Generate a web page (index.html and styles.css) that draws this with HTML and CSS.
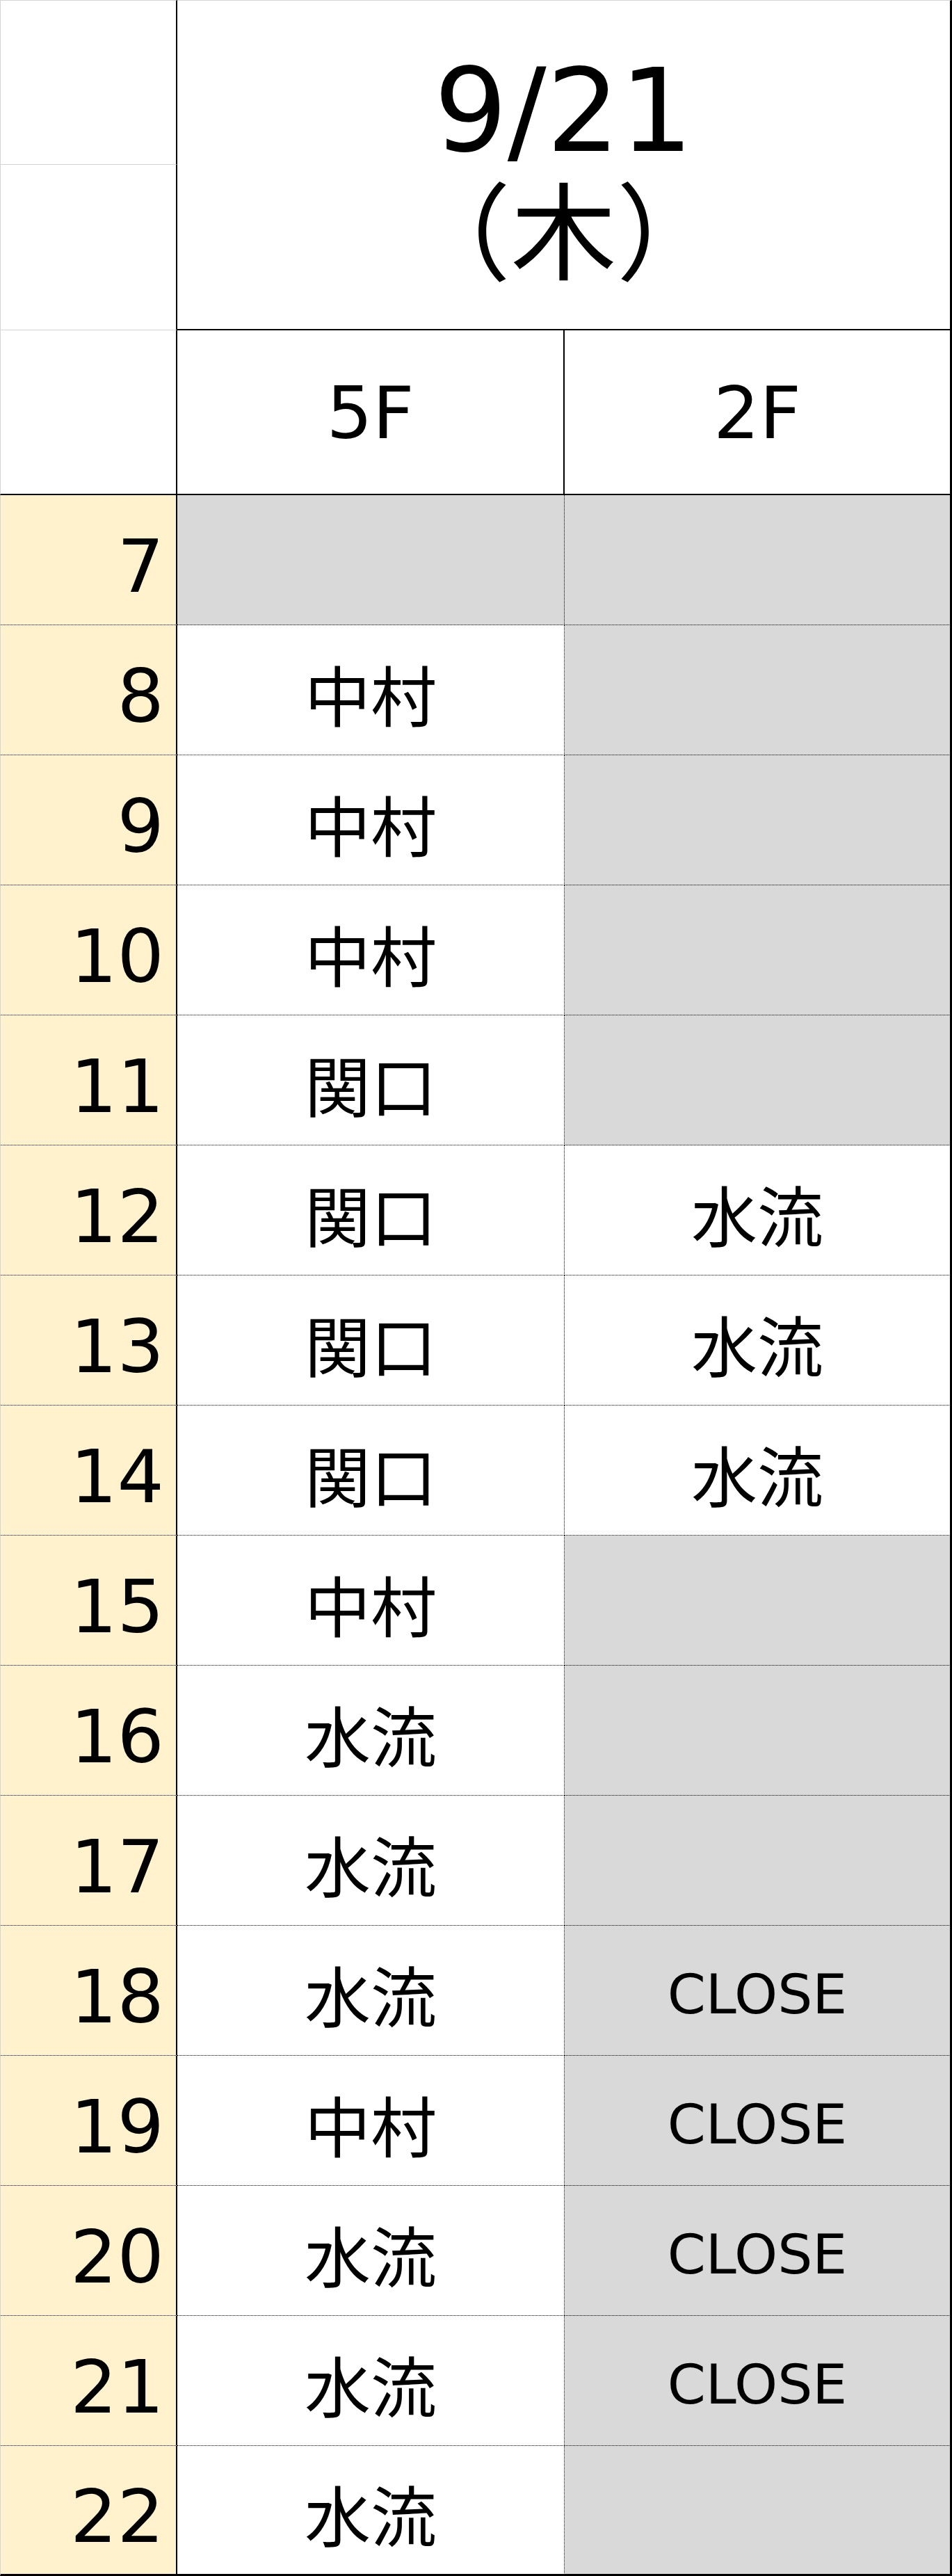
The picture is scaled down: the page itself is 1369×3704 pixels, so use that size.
FILE: index.html
```html
<!DOCTYPE html>
<html lang="ja">
<head>
<meta charset="utf-8">
<title>9/21（木）</title>
<link rel="stylesheet" href="styles.css">
</head>
<body>
<div class="sheet">
  <div class="cell corner corner-a"></div>
  <div class="cell date"><span class="date-line">9/21</span><span class="date-line day">（木）</span></div>
  <div class="cell corner corner-b"></div>
  <div class="cell corner corner-c"></div>
  <div class="cell floor f5">5F</div>
  <div class="cell floor f2">2F</div>

  <div class="cell hour">7</div><div class="cell slot s5 off"></div><div class="cell slot s2 off"></div>
  <div class="cell hour">8</div><div class="cell slot s5">中村</div><div class="cell slot s2 off"></div>
  <div class="cell hour">9</div><div class="cell slot s5">中村</div><div class="cell slot s2 off"></div>
  <div class="cell hour">10</div><div class="cell slot s5">中村</div><div class="cell slot s2 off"></div>
  <div class="cell hour">11</div><div class="cell slot s5">関口</div><div class="cell slot s2 off"></div>
  <div class="cell hour">12</div><div class="cell slot s5">関口</div><div class="cell slot s2">水流</div>
  <div class="cell hour">13</div><div class="cell slot s5">関口</div><div class="cell slot s2">水流</div>
  <div class="cell hour">14</div><div class="cell slot s5">関口</div><div class="cell slot s2">水流</div>
  <div class="cell hour">15</div><div class="cell slot s5">中村</div><div class="cell slot s2 off"></div>
  <div class="cell hour">16</div><div class="cell slot s5">水流</div><div class="cell slot s2 off"></div>
  <div class="cell hour">17</div><div class="cell slot s5">水流</div><div class="cell slot s2 off"></div>
  <div class="cell hour">18</div><div class="cell slot s5">水流</div><div class="cell slot s2 off close">CLOSE</div>
  <div class="cell hour">19</div><div class="cell slot s5">中村</div><div class="cell slot s2 off close">CLOSE</div>
  <div class="cell hour">20</div><div class="cell slot s5">水流</div><div class="cell slot s2 off close">CLOSE</div>
  <div class="cell hour">21</div><div class="cell slot s5">水流</div><div class="cell slot s2 off close">CLOSE</div>
  <div class="cell hour last">22</div><div class="cell slot s5 last">水流</div><div class="cell slot s2 off last"></div>
</div>
</body>
</html>
```

FILE: styles.css
```css
html, body {
  margin: 0;
  padding: 0;
  background: #ffffff;
}

.sheet {
  display: grid;
  grid-template-columns: 255px 557px 557px;
  grid-template-rows: 237px 238px 237px repeat(16, 187px);
  width: 1369px;
  font-family: "DejaVu Sans", "Noto Sans CJK JP", sans-serif;
  color: #000;
}

.cell {
  box-sizing: border-box;
  display: flex;
  align-items: center;
  justify-content: center;
  line-height: 1;
  white-space: nowrap;
}

.corner {
  grid-column: 1;
  border-left: 1px solid #d4d4d4;
  border-right: 2px solid #000;
  border-bottom: 1px solid #d4d4d4;
}
.corner-a { grid-row: 1; border-top: 1px solid #d4d4d4; }
.corner-b { grid-row: 2; }
.corner-c { grid-row: 3; border-bottom: 2px solid #000; }

.date {
  grid-column: 2 / 4;
  grid-row: 1 / 3;
  flex-direction: column;
  border-top: 1px solid #d4d4d4;
  border-right: 3px solid #000;
  border-bottom: 2px solid #000;
  padding-bottom: 4px;
}
.date-line {
  display: block;
  font-size: 166px;
  line-height: 180px;
}
.date-line.day {
  font-family: "Noto Sans CJK JP", sans-serif;
  font-size: 152px;
  line-height: 150px;
}

.floor {
  grid-row: 3;
  font-size: 104px;
  border-bottom: 2px solid #000;
  padding-top: 2px;
}
.f5 { border-right: 2px solid #000; }
.f2 { border-right: 3px solid #000; }

.hour {
  grid-column: 1;
  justify-content: flex-end;
  background: #fff2cc;
  border-left: 1px solid #d4d4d4;
  border-right: 2px solid #000;
  border-bottom: 1px dotted #000;
  padding-right: 17px;
  padding-top: 20px;
  font-size: 106px;
}

.slot {
  border-bottom: 1px dotted #000;
  font-family: "Noto Sans CJK JP", sans-serif;
  font-size: 95px;
  padding-top: 8px;
  background: #ffffff;
}
.s5 { border-right: 1px dotted #000; }
.s2 { border-right: 3px solid #000; }
.off { background: #d9d9d9; }
.close {
  font-family: "DejaVu Sans", sans-serif;
  font-size: 79px;
  padding-top: 12px;
}

.last { border-bottom: 3px solid #000; }
```
